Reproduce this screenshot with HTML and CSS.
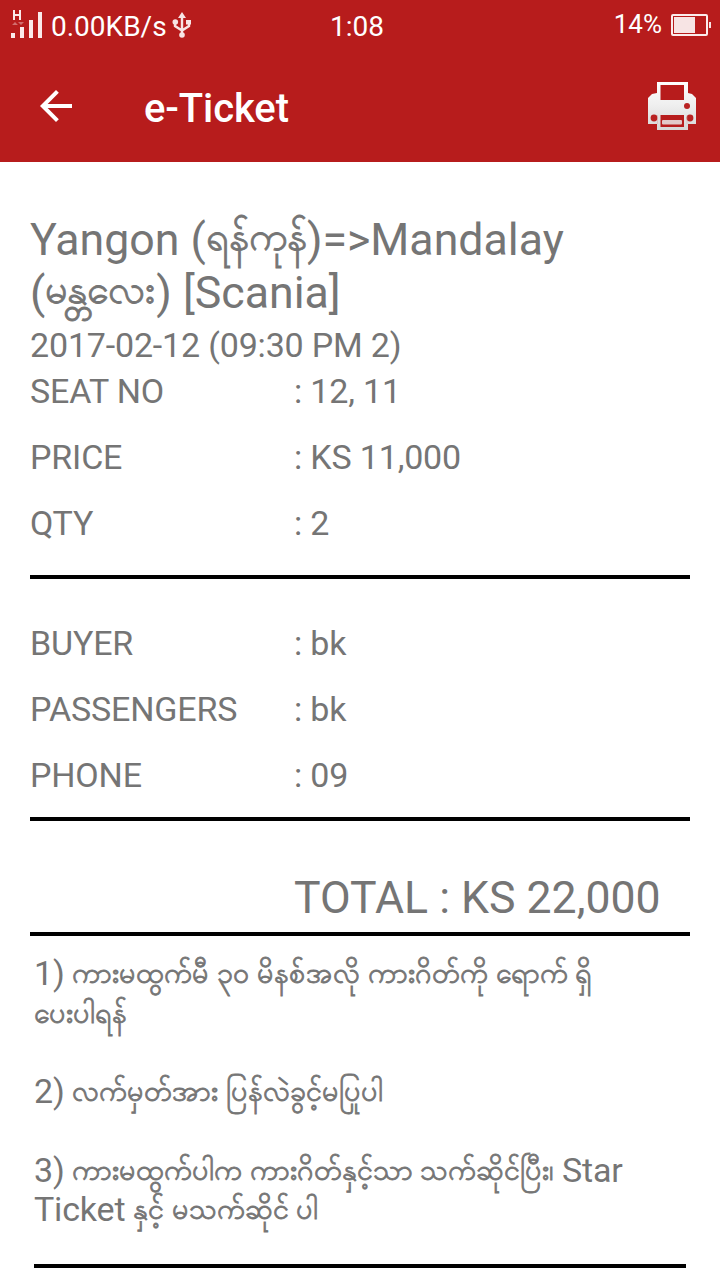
FILE: index.html
```html
<!DOCTYPE html>
<html lang="my">
<head>
<meta charset="utf-8">
<title>e-Ticket</title>
<link rel="stylesheet" href="styles.css">
</head>
<body>
<header class="top">
  <div class="status">
    <div class="status-left">
      <svg class="signal" width="34" height="32" viewBox="0 0 34 32" fill="#fbeaea">
        <path d="M3 2h2v4h4V2h2v10H9V8H5v4H3z"/>
        <path d="M2 17l3-3 3 3zM8 14h6l-3 3z" opacity=".4"/>
        <path d="M1 25h4v5H1zM10 19h4v11h-4zM19 12h4v18h-4zM28 4h4v26h-4z"/>
      </svg>
      <span class="speed">0.00KB/s</span>
      <svg class="usb" width="20" height="26" viewBox="0 0 20 26" fill="none" stroke="#f8e4e4" stroke-width="2.400">
        <path d="M10 5v18M3 10v4l7 4.500 7-4.500v-4"/>
        <path d="M10 0l4 6H6zM14 8h5v4.500h-5z" fill="#f8e4e4" stroke="none"/>
        <circle cx="3.300" cy="10" r="2.800" fill="#f8e4e4" stroke="none"/>
        <circle cx="10" cy="23" r="2.800" fill="#f8e4e4" stroke="none"/>
      </svg>
    </div>
    <span class="clock">1:08</span>
    <div class="status-right">
      <span class="percent">14%</span>
      <svg class="battery" width="40" height="22" viewBox="0 0 40 22">
        <rect x="1" y="1" width="35" height="20" rx="1" fill="none" stroke="#fbecec" stroke-width="2"/>
        <path d="M3 3h21v16H3zM38 8h2v6h-2z" fill="#f7e4e4"/>
      </svg>
    </div>
  </div>
  <div class="appbar">
    <svg class="back" width="32" height="32" viewBox="0 0 32 32" fill="#fff"><path d="M32 14H7.660L18.840 2.820 16 0 0 16l16 16 2.820-2.820L7.660 18H32z"/></svg>
    <h1 class="heading">e-Ticket</h1>
    <svg class="printer" width="48" height="48" viewBox="0 0 48 48">
      <defs><linearGradient id="body" x1="0" y1="0" x2="0" y2="1"><stop offset="0" stop-color="#fff"/><stop offset=".5" stop-color="#eee"/><stop offset="1" stop-color="#d6d6d6"/></linearGradient></defs>
      <path fill="url(#body)" fill-rule="evenodd" d="M9 0h31v11l4 1 4 4v26h-8v6H9v-6H0V16l4-4 5-1zM12.500 3v15h23.500V3zM12.500 33v12h23.500V33z"/>
      <g fill="#b92222"><circle cx="39" cy="24" r="3"/><circle cx="6" cy="36" r="3.400"/><circle cx="42" cy="36" r="3.400"/></g>
      <rect x="14" y="38" width="20" height="4.500" rx="1" fill="#e2c9c9"/>
      <path d="M9.500 33v9M39 33v9" stroke="#d99a9a" stroke-width="1" opacity=".4"/>
    </svg>
  </div>
</header>
<main class="ticket">
  <h2 class="route">Yangon (<span class="mm">ရန်ကုန်</span>)=&gt;Mandalay<br>(<span class="mm">မန္တလေး</span>) [Scania]</h2>
  <p class="date">2017-02-12 (09:30 PM 2)</p>
  <dl class="rows">
    <dt>SEAT NO</dt><dd>: 12, 11</dd>
    <dt>PRICE</dt><dd>: KS 11,000</dd>
    <dt>QTY</dt><dd>: 2</dd>
  </dl>
  <dl class="rows buyer">
    <dt>BUYER</dt><dd>: bk</dd>
    <dt>PASSENGERS</dt><dd>: bk</dd>
    <dt>PHONE</dt><dd>: 09</dd>
  </dl>
  <p class="total">TOTAL : KS 22,000</p>
  <div class="notes">
    <p>1)<span class="mm"> ကားမထွက်မီ ၃၀ မိနစ်အလို ကားဂိတ်ကို ရောက် ရှိ<br>ပေးပါရန်</span></p>
    <p>2)<span class="mm"> လက်မှတ်အား ပြန်လဲခွင့်မပြုပါ</span></p>
    <p>3)<span class="mm"> ကားမထွက်ပါက ကားဂိတ်နှင့်သာ သက်ဆိုင်ပြီး၊ </span>Star<br>Ticket<span class="mm"> နှင့် မသက်ဆိုင် ပါ</span></p>
  </div>
</main>
</body>
</html>
```
FILE: styles.css
```css
* { box-sizing: border-box; }
body { margin: 0; background: #fff; font-family: Roboto, "Noto Sans", sans-serif; color: #757575; }
h1, h2, p, dl, dd { margin: 0; font-weight: 400; }
svg { display: block; flex: none; }

.top { height: 162px; background: #b71c1c; color: #fff; }
.status { height: 50px; display: grid; grid-template-columns: 330px 1fr auto; align-items: start; font-size: 28px; line-height: 32px; }
.status-left, .status-right { display: flex; align-items: flex-start; }
.status-left { padding-left: 10px; }
.signal { margin-top: 8px; }
.speed { width: 121px; margin: 11px 0 0 7px; }
.usb { margin-top: 12px; }
.clock { margin-top: 11px; }
.status-right { padding-right: 9px; }
.percent { margin-top: 8px; margin-right: 9px; font-size: 26px; }
.battery { margin-top: 14px; }
.appbar { height: 112px; padding: 0 24px 0 40px; display: flex; align-items: center; }
.back { margin-right: 72px; }
.heading { flex: 1; font-size: 40px; font-weight: 500; letter-spacing: -0.1px; line-height: 48px; padding-top: 6px; }

.ticket { padding: 52px 30px 0; font-size: 34px; letter-spacing: -0.17px; }
.mm { line-height: 1px; letter-spacing: 0; -webkit-text-stroke: 0.8px #757575; }
.route { font-size: 44.700px; letter-spacing: 0; line-height: 53px; white-space: nowrap; }
.route .mm { font-size: 39.500px; vertical-align: 5px; }
.date { margin-top: 5px; line-height: 40px; }
.rows { display: grid; grid-template-columns: 264px 1fr; grid-auto-rows: 66px; line-height: 40px; margin-top: 6px; height: 208px; border-bottom: 4px solid #000; }
.buyer { margin-top: 44px; height: 198px; }
.total { margin-top: 51px; padding-left: 264px; height: 64px; font-size: 44.600px; letter-spacing: 0; line-height: 53px; white-space: nowrap; border-bottom: 4px solid #000; }
.notes { display: grid; gap: 39px; margin: 0 4px; padding-top: 18px; height: 332px; line-height: 39.500px; white-space: nowrap; border-bottom: 4px solid #000; align-content: start; }
.notes .mm { font-size: 28.600px; word-spacing: 0.500px; vertical-align: 2px; }
```
